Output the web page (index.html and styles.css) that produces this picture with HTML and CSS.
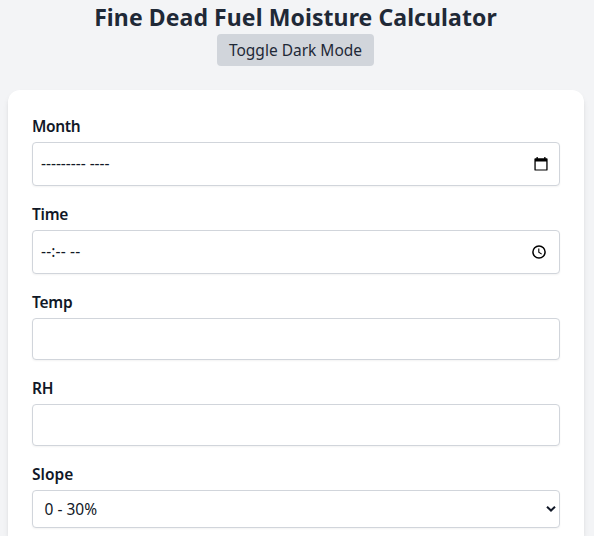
FILE: index.html
```html
<!DOCTYPE html>
<html lang="en">
<head>
<meta charset="utf-8">
<title>Fine Dead Fuel Moisture Calculator</title>
<link rel="stylesheet" href="styles.css">
</head>
<body>
<main class="page">
  <header class="header">
    <h1 class="title">Fine Dead Fuel Moisture Calculator</h1>
    <button class="toggle" type="button">Toggle Dark Mode</button>
  </header>
  <form class="card">
    <div class="group">
      <label class="label month-label">Month</label>
      <div class="field picker">
        <span class="value month-value">--------- ----</span>
        <svg class="calendar" width="14" height="14" viewBox="0 0 14 14">
          <path d="M2.5 0h1.3v1.2h6.4V0h1.3v1.2h1.2q.9 0 .9.9v10.6q0 .9-.9.9H1.3q-.9 0-.9-.9V2.1q0-.9.9-.9h1.2zM1.7 4.6v7.8h10.6V4.6z" fill="#000" fill-rule="evenodd"/>
        </svg>
      </div>
    </div>
    <div class="group">
      <label class="label time-label">Time</label>
      <div class="field picker">
        <span class="value time-value">--:-- --</span>
        <svg class="clock" width="14" height="14" viewBox="0 0 14 14" fill="none" stroke="#000">
          <circle cx="7" cy="7" r="6.1" stroke-width="1.5"/>
          <path d="M6.8 3.4v3.9l2.9 1.8" stroke-width="1.1"/>
        </svg>
      </div>
    </div>
    <div class="group">
      <label class="label temp-label" for="temp">Temp</label>
      <input class="field" id="temp">
    </div>
    <div class="group">
      <label class="label rh-label" for="rh">RH</label>
      <input class="field" id="rh">
    </div>
    <div class="group">
      <label class="label">Slope</label>
      <div class="field select">
        <span class="value">0 - 30%</span>
        <svg class="chevron" width="10" height="8" viewBox="0 0 10 8" fill="none" stroke="#111827" stroke-width="2">
          <path d="M1 1.7l4 3.8 4-3.8"/>
        </svg>
      </div>
    </div>
  </form>
</main>
</body>
</html>
```

FILE: styles.css
```css
* {
  box-sizing: border-box;
}

body {
  margin: 0;
  background: #f3f4f6;
  color: #111827;
  font: 15.5px/24px "Noto Sans", sans-serif;
}

.page {
  height: 536px;
  padding: 2px 10px 0 8px;
  overflow: hidden;
}

.header {
  display: flex;
  flex-direction: column;
  align-items: center;
  margin: 0 1px 24px 0;
  color: #1f2937;
}

.title {
  height: 32px;
  margin: 0;
  font-size: 23px;
  font-weight: 700;
  letter-spacing: .09px;
  line-height: 30px;
  white-space: nowrap;
}

.toggle {
  width: 157px;
  height: 32px;
  padding: 0;
  border: 0;
  border-radius: 4px;
  background: #d1d5db;
  color: #1f2937;
  font: inherit;
  white-space: nowrap;
}

.card {
  height: 446px;
  padding: 24px 24px 0;
  border-radius: 12px 12px 0 0;
  background: #fff;
  box-shadow: 0 4px 6px -1px rgba(0, 0, 0, .1), 0 2px 4px -2px rgba(0, 0, 0, .1);
}

.group + .group {
  margin-top: 16px;
}

.label {
  display: block;
  width: max-content;
  margin-bottom: 4px;
  font-weight: 600;
}

.month-label {
  letter-spacing: -.35px;
}

.time-label,
.temp-label {
  letter-spacing: -.25px;
}

.rh-label {
  letter-spacing: -.3px;
}

.field {
  display: flex;
  align-items: center;
  justify-content: space-between;
  width: 100%;
  height: 42px;
  padding: 0 8px;
  border: 1px solid #d1d5db;
  border-radius: 4px;
  background: #fff;
  box-shadow: 0 1px 2px rgba(0, 0, 0, .05);
}

.picker {
  height: 44px;
}

.select {
  height: 38px;
  padding: 0 3px 0 11.5px;
}

.value {
  white-space: pre;
}

.month-value,
.time-value {
  margin-top: -2px;
}

.month-value {
  letter-spacing: -.03px;
}

.time-value {
  letter-spacing: .15px;
}

.calendar {
  margin-right: 3px;
}

.clock {
  margin-right: 5px;
}
```
